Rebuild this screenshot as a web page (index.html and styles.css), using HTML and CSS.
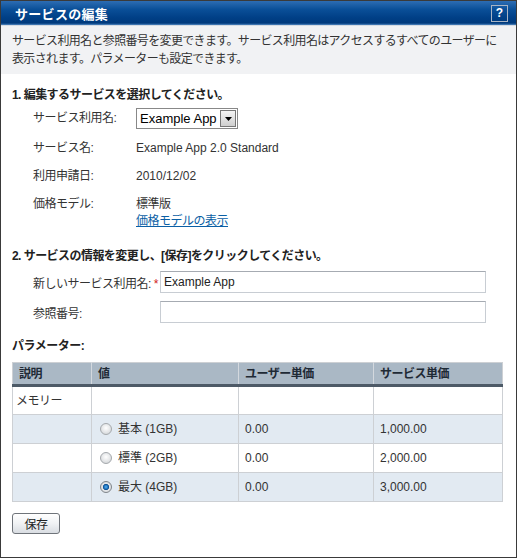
FILE: index.html
```html
<!DOCTYPE html>
<html lang="ja">
<head>
<meta charset="utf-8">
<title>サービスの編集</title>
<link rel="stylesheet" href="styles.css">
</head>
<body>
<div class="window">
  <div class="titlebar">
    <span class="title">サービスの編集</span>
    <span class="help">?</span>
  </div>
  <div class="desc">サービス利用名と参照番号を変更できます。サービス利用名はアクセスするすべてのユーザーに表示されます。パラメーターも設定できます。</div>
  <div class="content">
    <h2 class="step">1. 編集するサービスを選択してください。</h2>
    <div class="info">
      <div class="lbl sel-lbl">サービス利用名:</div>
      <div class="val sel-val"><span class="select"><span class="select-text">Example App</span><span class="select-btn"><svg width="7" height="4" viewBox="0 0 7 4"><path d="M0 0h7L3.5 4z" fill="#000"/></svg></span></span></div>
      <div class="lbl">サービス名:</div>
      <div class="val">Example App 2.0 Standard</div>
      <div class="lbl">利用申請日:</div>
      <div class="val">2010/12/02</div>
      <div class="lbl">価格モデル:</div>
      <div class="val"><span class="jp">標準版</span><br><a class="link" href="#">価格モデルの表示</a></div>
    </div>
    <h2 class="step step2">2. サービスの情報を変更し、[保存]をクリックしてください。</h2>
    <div class="edit">
      <div class="lbl">新しいサービス利用名: <span class="req">*</span></div>
      <div class="input">Example App</div>
      <div class="lbl">参照番号:</div>
      <div class="input"></div>
    </div>
    <h2 class="params">パラメーター:</h2>
    <table class="grid">
      <thead>
        <tr><th class="c1">説明</th><th class="c2">値</th><th class="c3">ユーザー単価</th><th class="c4">サービス単価</th></tr>
      </thead>
      <tbody>
        <tr class="odd first"><td class="jp">メモリー</td><td></td><td></td><td></td></tr>
        <tr class="even"><td></td><td><span class="radio"></span>基本 (1GB)</td><td>0.00</td><td>1,000.00</td></tr>
        <tr class="odd"><td></td><td><span class="radio"></span>標準 (2GB)</td><td>0.00</td><td>2,000.00</td></tr>
        <tr class="even"><td></td><td><span class="radio on"></span>最大 (4GB)</td><td>0.00</td><td>3,000.00</td></tr>
      </tbody>
    </table>
    <div class="actions"><span class="btn">保存</span></div>
  </div>
</div>
</body>
</html>
```

FILE: styles.css
```css
* { box-sizing: border-box; }
html, body { margin: 0; padding: 0; background: #fff; }
body {
  font-family: "Liberation Sans", Arial, "Noto Sans CJK JP", sans-serif;
  font-size: 12px;
  color: #333;
}
.window {
  width: 517px;
  height: 558px;
  border: 1px solid #3a3a3a;
  background: #fff;
}
.titlebar {
  height: 24px;
  display: flex;
  align-items: center;
  justify-content: space-between;
  padding: 0 8px 0 14px;
  background: linear-gradient(#2d6db3 0%, #0a4f98 35%, #003f86 70%, #003a7c 92%, #4f86c0 100%);
}
.title {
  color: #fff;
  font-weight: bold;
  font-size: 13px;
  letter-spacing: 0.3px;
}
.help {
  width: 17px;
  height: 17px;
  border: 1px solid #a8b4c4;
  color: #fff;
  font-size: 12px;
  font-weight: bold;
  display: flex;
  align-items: center;
  justify-content: center;
  line-height: 1;
}
.desc {
  background: #f1f2f4;
  padding: 6px 8px 6px 11px;
  line-height: 18px;
  height: 49px;
  border-top: 1px solid #d5dbe3;
  letter-spacing: -0.65px;
}
.jp, .lbl, .link, .params, .grid th, .btn { letter-spacing: -0.5px; }
.content { padding: 0 10px 0 11px; }
.step {
  margin: 13px 0 0 0;
  font-size: 12px;
  font-weight: bold;
  line-height: 16px;
  color: #222;
  letter-spacing: -0.55px;
}
.step2 { margin-top: 18px; }
.info {
  display: grid;
  grid-template-columns: 103px 1fr;
  row-gap: 11px;
  padding-left: 21px;
  margin-top: 5px;
  line-height: 17px;
}
.sel-lbl, .sel-val { display: flex; align-items: center; min-height: 21px; }
.select {
  display: inline-flex;
  align-items: center;
  width: 102px;
  height: 21px;
  border: 1px solid #888;
  background: #fff;
  padding: 1px;
}
.select-text {
  flex: 1;
  font-size: 13px;
  color: #000;
  padding-left: 2px;
  white-space: nowrap;
  overflow: hidden;
}
.select-btn {
  width: 16px;
  height: 17px;
  border: 1px solid #777;
  background: linear-gradient(#f4f4f4, #cfcfcf);
  display: flex;
  align-items: center;
  justify-content: center;
}
.link { color: #0b5fa5; text-decoration: underline; }
.edit {
  display: grid;
  grid-template-columns: 127px 326px;
  row-gap: 8px;
  padding-left: 21px;
  margin-top: 7px;
  align-items: center;
}
.edit .lbl { white-space: nowrap; }
.req { color: #d02020; }
.input {
  height: 22px;
  border: 1px solid #c8cdd3;
  border-top-color: #a6abb2;
  background: #fff;
  padding: 2px 3px;
  font-size: 12px;
  line-height: 16px;
  color: #222;
}
.params {
  margin: 15px 0 0 0;
  font-size: 12px;
  font-weight: bold;
  line-height: 16px;
  color: #222;
}
.grid {
  margin-top: 8px;
  width: 490px;
  border-collapse: collapse;
  border: 1px solid #cdd0d4;
  table-layout: fixed;
}
.grid th {
  background: #aab8c5;
  border-left: 1px solid #d3d8de;
  border-bottom: 3px solid #4d5a67;
  text-align: left;
  font-weight: bold;
  height: 23px;
  padding: 0 6px;
  color: #1f2a35;
  font-size: 12px;
  line-height: 16px;
}
.grid th:first-child { border-left: none; }
.grid .c1 { width: 79px; }
.grid .c2 { width: 147px; }
.grid .c3 { width: 135px; }
.grid .c4 { width: 129px; }
.grid td {
  border: 1px solid #cdd0d4;
  height: 29px;
  padding: 0 4px 0 6px;
  font-size: 12px;
  line-height: 16px;
  color: #333;
}
.grid tr.first td { height: 29px; padding-left: 3px; }
.grid tr.even td { background: #e2eaf2; }
.grid tr.odd td { background: #fff; }
.grid td:nth-child(2) { padding-left: 8px; }
.radio {
  display: inline-block;
  width: 12px;
  height: 12px;
  border-radius: 50%;
  border: 1px solid #a5a9ad;
  background: radial-gradient(circle at 50% 40%, #fff 0%, #e1e3e5 60%, #c9ccd0 100%);
  vertical-align: -2px;
  margin-right: 6px;
}
.radio.on {
  background: radial-gradient(circle at 50% 50%, #5fb0ea 0%, #1a72c0 28%, #0b4a8a 40%, #e6e8ea 45%, #cfd2d6 100%);
  border-color: #7f858b;
}
.actions { margin-top: 11px; }
.btn {
  display: inline-flex;
  align-items: center;
  justify-content: center;
  width: 48px;
  height: 21px;
  border: 1px solid #6f747a;
  border-radius: 3px;
  background: linear-gradient(#ffffff, #f0f2f4 50%, #d9dde2);
  font-size: 12px;
  color: #222;
}
```
